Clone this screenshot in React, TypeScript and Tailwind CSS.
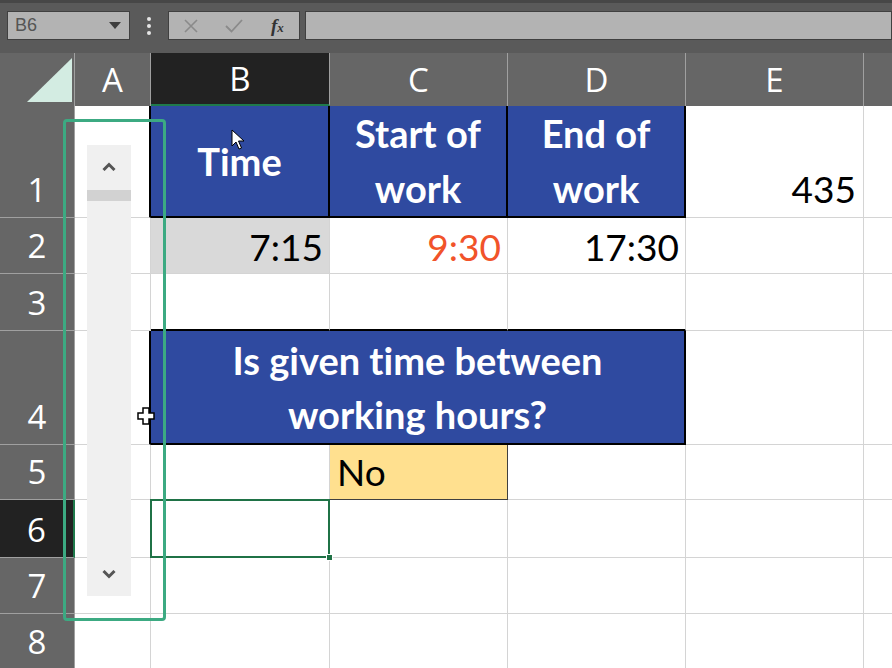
import React from "react";

const G = "border-r border-b border-[#d4d4d4]";
const HB = "border-r border-b border-[#a0a0a0]";

function RowHead({ n, sel }: { n: number; sel?: boolean }) {
  return (
    <div
      className={`flex items-end justify-center pb-[5px] text-white text-[33px] leading-[44px] ${
        sel ? "bg-[#222222] border-r-2 border-r-[#1f7a4c] border-b border-b-[#a0a0a0]" : `bg-[#666666] ${HB}`
      }`}
      style={{ fontFamily: '"Open Sans", sans-serif' }}
    >
      {n}
    </div>
  );
}

function ColHead({ l, sel }: { l: string; sel?: boolean }) {
  return (
    <div
      className={`flex items-center justify-center text-white text-[33px] ${
        sel ? "bg-[#222222] border-b-2 border-b-[#1f7a4c] border-r border-r-[#a0a0a0]" : `bg-[#666666] border-r border-[#a0a0a0]`
      }`}
      style={{ fontFamily: '"Open Sans", sans-serif' }}
    >
      {l}
    </div>
  );
}

export default function App() {
  const font = { fontFamily: 'Lato, "Open Sans", sans-serif' };
  const num = "text-[37px] leading-[44px]";
  const hdr = "text-white font-bold text-[38px]";
  return (
    <div className="w-[892px] h-[668px] overflow-hidden bg-white relative select-none">
      {/* Top formula bar */}
      <div className="h-[53px] bg-[#5a5a5a] border-t-[3px] border-[#474747] flex items-start pt-[8px] px-[7px] gap-0">
        <div className="w-[123px] h-[29px] bg-[#b3b3b3] border border-[#404040] flex items-center justify-between pl-[7px] pr-[8px]">
          <span className="text-[#555555] text-[18px]" style={{ fontFamily: '"Liberation Sans", sans-serif' }}>B6</span>
          <svg width="12" height="7" viewBox="0 0 12 7"><path d="M0 0h12L6 7z" fill="#3d3d3d" /></svg>
        </div>
        <div className="w-[38px] h-[29px] flex flex-col items-center justify-center gap-[3px]">
          <span className="w-[4px] h-[4px] rounded-full bg-[#e6e6e6]" />
          <span className="w-[4px] h-[4px] rounded-full bg-[#e6e6e6]" />
          <span className="w-[4px] h-[4px] rounded-full bg-[#e6e6e6]" />
        </div>
        <div className="w-[132px] h-[29px] bg-[#b3b3b3] border border-[#404040] flex items-center">
          <div className="w-[44px] flex justify-center">
            <svg width="14" height="14" viewBox="0 0 14 14"><path d="M1 1L13 13M13 1L1 13" stroke="#8a8a8a" strokeWidth="1.6" /></svg>
          </div>
          <div className="w-[44px] flex justify-center">
            <svg width="18" height="14" viewBox="0 0 18 14"><path d="M1 7L6.5 12.5L17 1" stroke="#8a8a8a" strokeWidth="1.8" fill="none" /></svg>
          </div>
          <div className="w-[44px] flex justify-center">
            <span className="text-[#333333] text-[19px] italic font-bold leading-none" style={{ fontFamily: '"Liberation Serif", serif' }}>f<span className="text-[13px]">x</span></span>
          </div>
        </div>
        <div className="ml-[5px] flex-1 h-[29px] bg-[#b3b3b3] border border-[#404040] -mr-[7px]" />
      </div>

      {/* Grid */}
      <div
        className="grid grid-cols-[75px_76px_179px_178px_178px_178px_1fr] grid-rows-[53px_112px_56px_57px_114px_55px_58px_56px_56px] [font-variant-ligatures:none]"
        style={font}
      >
        {/* header row */}
        <div className="bg-[#666666] border-r border-[#a0a0a0] relative">
          <svg className="absolute left-[27px] top-[5px]" width="45" height="44" viewBox="0 0 45 44">
            <path d="M0 44H45V0Z" fill="#d3ece2" />
          </svg>
        </div>
        <ColHead l="A" />
        <ColHead l="B" sel />
        <ColHead l="C" />
        <ColHead l="D" />
        <ColHead l="E" />
        <div className="bg-[#666666]" />

        {/* row 1 */}
        <RowHead n={1} />
        <div className="border-r-2 border-r-black border-b border-b-[#d4d4d4]" />
        <div className={`bg-[#2f4aa0] border-r-2 border-b-2 border-black flex items-center justify-center ${hdr} leading-[55px]`}>Time</div>
        <div className={`bg-[#2f4aa0] border-r-2 border-b-2 border-black flex items-center justify-center text-center ${hdr} leading-[55px]`}>
          Start of<br />work
        </div>
        <div className={`bg-[#2f4aa0] border-r-2 border-b-2 border-black flex items-center justify-center text-center ${hdr} leading-[55px]`}>
          End of<br />work
        </div>
        <div className={`${G} flex items-end justify-end pr-[7px] pb-[6px] ${num} text-black`}>435</div>
        <div className="border-b border-[#d4d4d4]" />

        {/* row 2 */}
        <RowHead n={2} />
        <div className={G} />
        <div className={`${G} bg-[#d9d9d9] flex items-end justify-end pr-[6px] pb-[4px] ${num} text-black`}>7:15</div>
        <div className={`${G} flex items-end justify-end pr-[6px] pb-[4px] ${num} text-[#f1532a]`}>9:30</div>
        <div className={`${G} flex items-end justify-end pr-[6px] pb-[4px] ${num} text-black`}>17:30</div>
        <div className={G} />
        <div className="border-b border-[#d4d4d4]" />

        {/* row 3 */}
        <RowHead n={3} />
        <div className={G} />
        <div className="border-r border-r-[#d4d4d4] border-b-2 border-b-black" />
        <div className="border-r border-r-[#d4d4d4] border-b-2 border-b-black" />
        <div className="border-r border-r-[#d4d4d4] border-b-2 border-b-black" />
        <div className={G} />
        <div className="border-b border-[#d4d4d4]" />

        {/* row 4 */}
        <RowHead n={4} />
        <div className="border-r-2 border-r-black border-b border-b-[#d4d4d4]" />
        <div className={`col-span-3 bg-[#2f4aa0] border-r-2 border-b-2 border-black flex items-center justify-center text-center ${hdr} leading-[54px]`}>
          Is given time between<br />working hours?
        </div>
        <div className={G} />
        <div className="border-b border-[#d4d4d4]" />

        {/* row 5 */}
        <RowHead n={5} />
        <div className={G} />
        <div className={G} />
        <div className={`bg-[#ffe08f] border-r border-b border-[#404040] flex items-end pl-[7px] pb-[5px] ${num} text-black`}>No</div>
        <div className={G} />
        <div className={G} />
        <div className="border-b border-[#d4d4d4]" />

        {/* row 6 */}
        <RowHead n={6} sel />
        <div className={G} />
        <div className="relative border-2 border-[#1f7246] -ml-px -mt-px">
          <span className="absolute -right-[5px] -bottom-[5px] w-[7px] h-[7px] bg-[#1f7246] border border-white" />
        </div>
        <div className={G} />
        <div className={G} />
        <div className={G} />
        <div className="border-b border-[#d4d4d4]" />

        {/* row 7 */}
        <RowHead n={7} />
        <div className={G} />
        <div className={G} />
        <div className={G} />
        <div className={G} />
        <div className={G} />
        <div className="border-b border-[#d4d4d4]" />

        {/* row 8 */}
        <RowHead n={8} />
        <div className={G} />
        <div className={G} />
        <div className={G} />
        <div className={G} />
        <div className={G} />
        <div className="border-b border-[#d4d4d4]" />
      </div>

      {/* Scrollbar form control */}
      <div className="absolute left-[87px] top-[145px] w-[44px] h-[451px] bg-[#f0f0f0] flex flex-col items-center">
        <svg className="mt-[17px]" width="14" height="9" viewBox="0 0 14 9"><path d="M1.5 8L7 2.5L12.5 8" stroke="#555" strokeWidth="3" fill="none" /></svg>
        <div className="mt-[19px] w-full h-[11px] bg-[#d2d2d2]" />
        <div className="flex-1" />
        <svg className="mb-[17px]" width="14" height="9" viewBox="0 0 14 9"><path d="M1.5 1L7 6.5L12.5 1" stroke="#555" strokeWidth="3" fill="none" /></svg>
      </div>

      {/* Highlight rectangle */}
      <div className="absolute left-[63px] top-[119px] w-[103px] h-[502px] border-[3px] border-[#3caa82] rounded-[4px]" />

      {/* Arrow cursor */}
      <svg className="absolute left-[231px] top-[129px]" width="14" height="22" viewBox="0 0 14 22">
        <path d="M1 1V17L5 13L8 20L10.5 19L7.5 12H13Z" fill="white" stroke="black" strokeWidth="1" />
      </svg>

      {/* Plus cursor */}
      <svg className="absolute left-[137px] top-[407px]" width="18" height="18" viewBox="0 0 18 18">
        <path d="M6 1H12V6H17V12H12V17H6V12H1V6H6Z" fill="white" stroke="black" strokeWidth="1.5" />
      </svg>
    </div>
  );
}
